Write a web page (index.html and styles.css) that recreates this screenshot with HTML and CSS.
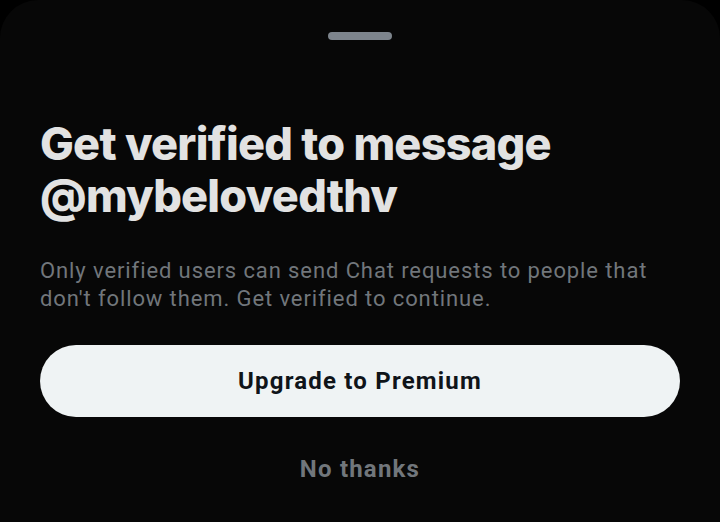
FILE: index.html
```html
<!DOCTYPE html>
<html lang="en">
<head>
<meta charset="utf-8">
<title>Get verified</title>
<link rel="stylesheet" href="styles.css">
</head>
<body>
<div class="sheet">
  <div class="handle"></div>
  <h1 class="title">Get verified to message @mybelovedthv</h1>
  <p class="desc">Only verified users can send Chat requests to people that don't follow them. Get verified to continue.</p>
  <button class="primary">Upgrade to Premium</button>
  <button class="secondary">No thanks</button>
</div>
</body>
</html>
```

FILE: styles.css
```css
html, body {
  margin: 0;
  padding: 0;
  background: #000;
  height: 100%;
}
.sheet {
  box-sizing: border-box;
  height: 522px;
  background: #070707;
  border-radius: 38px 38px 0 0;
  padding: 32px 40px 0;
  display: flex;
  flex-direction: column;
  overflow: hidden;
}
.handle {
  align-self: center;
  width: 64px;
  height: 8px;
  border-radius: 4px;
  background: #7d848c;
  flex: none;
}
.title {
  margin: 78px 0 0;
  font-family: Inter, "Liberation Sans", sans-serif;
  font-weight: 800;
  font-size: 45px;
  line-height: 52px;
  color: #e2e2e2;
  letter-spacing: -0.75px;
}
.desc {
  margin: 35px 0 0;
  font-family: Roboto, "Liberation Sans", sans-serif;
  font-size: 22px;
  line-height: 28px;
  letter-spacing: 0.9px;
  color: #71767b;
}
.primary {
  margin-top: 32px;
  height: 72px;
  border: none;
  border-radius: 36px;
  background: #eff3f4;
  color: #0f1419;
  font-family: Roboto, "Liberation Sans", sans-serif;
  font-weight: 700;
  font-size: 24px;
  letter-spacing: 1.2px;
  padding: 0;
  flex: none;
}
.secondary {
  margin-top: 16px;
  height: 72px;
  border: none;
  background: transparent;
  color: #71767b;
  font-family: Roboto, "Liberation Sans", sans-serif;
  font-weight: 700;
  font-size: 24px;
  letter-spacing: 1.2px;
  padding: 0;
  flex: none;
}
```
